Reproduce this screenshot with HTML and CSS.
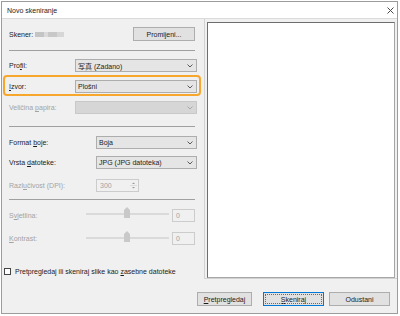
FILE: index.html
```html
<!DOCTYPE html>
<html>
<head>
    <title>Novo skeniranje</title>
    <link rel="stylesheet" href="styles.css">
</head>
<body>
    <div class="window">
        <div class="titlebar">
            <span class="title">Novo skeniranje</span>
            <svg class="close" width="7" height="7" viewBox="0 0 7 7"><path d="M0.5 0.5 L6.5 6.5 M6.5 0.5 L0.5 6.5" stroke="#4a4a4a" stroke-width="1" fill="none"/></svg>
        </div>

        <div class="main">
            <div class="settings">
                <div class="row row-scanner">
                    <span class="scanner-label">Skener:</span>
                    <span class="scanner-name"></span>
                    <button class="btn btn-change">Promi<u>j</u>eni...</button>
                </div>

                <div class="sep sep-first"></div>

                <div class="row row-profile">
                    <span class="label">Pro<u>f</u>il:</span>
                    <div class="select select-wide">
                        <span class="cjk">写真 (Zadano)</span>
                        <svg class="chev" width="6" height="4" viewBox="0 0 6 4"><path d="M0.5 0.5 L3 3 L5.5 0.5" fill="none" stroke="#5a5a5a"/></svg>
                    </div>
                </div>

                <div class="highlight">
                    <div class="row">
                        <span class="label"><u>I</u>zvor:</span>
                        <div class="select select-wide">
                            <span>Plošni</span>
                            <svg class="chev" width="6" height="4" viewBox="0 0 6 4"><path d="M0.5 0.5 L3 3 L5.5 0.5" fill="none" stroke="#5a5a5a"/></svg>
                        </div>
                    </div>
                </div>

                <div class="row row-paper disabled">
                    <span class="label">Veličina <u>p</u>apira:</span>
                    <div class="select select-wide select-off">
                        <span></span>
                        <svg class="chev" width="6" height="4" viewBox="0 0 6 4"><path d="M0.5 0.5 L3 3 L5.5 0.5" fill="none" stroke="#a8a8a8"/></svg>
                    </div>
                </div>

                <div class="sep sep-second"></div>

                <div class="row row-color">
                    <span class="label">Format <u>b</u>oje:</span>
                    <div class="select select-narrow">
                        <span>Boja</span>
                        <svg class="chev" width="6" height="4" viewBox="0 0 6 4"><path d="M0.5 0.5 L3 3 L5.5 0.5" fill="none" stroke="#5a5a5a"/></svg>
                    </div>
                </div>

                <div class="row row-type">
                    <span class="label">Vrsta <u>d</u>atoteke:</span>
                    <div class="select select-narrow">
                        <span>JPG (JPG datoteka)</span>
                        <svg class="chev" width="6" height="4" viewBox="0 0 6 4"><path d="M0.5 0.5 L3 3 L5.5 0.5" fill="none" stroke="#5a5a5a"/></svg>
                    </div>
                </div>

                <div class="row row-dpi disabled">
                    <span class="label">Razl<u>u</u>čivost (DPI):</span>
                    <div class="spin">
                        <span class="spin-value">300</span>
                        <span class="spin-arrows">
                            <svg width="9" height="11" viewBox="0 0 9 11"><path d="M3 4 L4.5 2.5 L6 4 Z" fill="#9a9a9a"/><path d="M1 5.5 H8" stroke="#dcdcdc"/><path d="M3 7 L4.5 8.5 L6 7 Z" fill="#9a9a9a"/></svg>
                        </span>
                    </div>
                    <span class="spin-fill"></span>
                </div>

                <div class="sep sep-third"></div>

                <div class="row row-bright disabled">
                    <span class="label slider-label">S<u>v</u>jetlina:</span>
                    <svg class="slider" width="83" height="13" viewBox="0 0 83 13"><rect x="0" y="4" width="83" height="2" fill="#dadada"/><polygon points="38,1 41,-2 44,1 44,9 38,9" fill="#c9c9c9"/></svg>
                    <span class="value-box">0</span>
                </div>

                <div class="row row-contrast disabled">
                    <span class="label slider-label"><u>K</u>ontrast:</span>
                    <svg class="slider" width="83" height="13" viewBox="0 0 83 13"><rect x="0" y="5" width="83" height="2" fill="#dadada"/><polygon points="38,2 41,-1 44,2 44,10 38,10" fill="#c9c9c9"/></svg>
                    <span class="value-box">0</span>
                </div>

                <div class="check-row">
                    <span class="checkbox"></span>
                    <span>Pretpregledaj ili skeniraj slike kao <u>z</u>asebne datoteke</span>
                </div>
            </div>

            <div class="preview">
                <div class="preview-box"></div>
            </div>
        </div>

        <div class="footer">
            <button class="btn btn-preview"><u>P</u>retpregledaj</button>
            <button class="btn btn-scan"><u>S</u>keniraj</button>
            <button class="btn btn-cancel">Odustani</button>
        </div>
    </div>
</body>
</html>
```

FILE: styles.css
```css
body {
    margin: 0;
    padding: 1px 0 0 1px;
    background: #fff;
    font-family: "Liberation Sans", Arial, sans-serif;
    font-size: 7px;
    color: #1c1c1c;
}
.window {
    width: 395px;
    height: 311px;
    border: 1px solid #9c9c9c;
    background: #f0f0f0;
    display: flex;
    flex-direction: column;
}
.titlebar {
    height: 16px;
    background: #fff;
    border-bottom: 1px solid #dadada;
    display: flex;
    align-items: center;
    justify-content: space-between;
    padding: 0 3px 0 5px;
}
.title {
    padding-top: 1px;
}
.close {
    display: block;
}
.main {
    height: 260px;
    display: flex;
}
.settings {
    width: 202px;
    padding: 0 7px;
    box-sizing: border-box;
    flex: none;
}
.row {
    display: flex;
    align-items: center;
    height: 13px;
}
.label {
    flex: 1;
    white-space: nowrap;
}
.disabled {
    color: #a3a3a3;
}
u {
    text-decoration-thickness: 1px;
    text-underline-offset: 1px;
}

/* scanner row */
.row-scanner {
    margin-top: 8px;
    height: 14px;
}
.scanner-name {
    display: inline-block;
    width: 29px;
    height: 5px;
    margin-left: 2px;
    background: linear-gradient(90deg, #c4c4c4 0 30%, #dadada 30% 45%, #c8c8c8 45% 75%, #d6d6d6 75%);
    filter: blur(0.4px);
}
.btn {
    height: 14px;
    border: 1px solid #adadad;
    background: #e1e1e1;
    font-family: inherit;
    font-size: 7px;
    color: #1c1c1c;
    padding: 0;
    box-sizing: border-box;
}
.btn-change {
    width: 62px;
    margin-left: auto;
    margin-right: 2px;
}

.sep {
    height: 1px;
    background: #a0a0a0;
    margin-right: 2px;
}
.sep-first {
    margin-top: 9px;
}
.sep-second {
    margin-top: 12px;
}
.sep-third {
    margin-top: 7px;
}

/* combo boxes */
.select {
    height: 13px;
    box-sizing: border-box;
    border: 1px solid #adadad;
    background: #e5e5e5;
    display: flex;
    align-items: center;
    justify-content: space-between;
    padding: 0 3px 0 2px;
    flex: none;
    color: #1c1c1c;
}
.select-wide {
    width: 122px;
}
.select-narrow {
    width: 101px;
}
.select-off {
    background: #d6d6d6;
    border-color: #c8c8c8;
}
.chev {
    display: block;
}
.cjk {
    font-family: "Liberation Sans", "Noto Sans CJK JP", sans-serif;
}

.row-profile {
    margin-top: 8px;
}
.highlight {
    margin: 3px -4px 0 -6px;
    border: 2px solid #f6a72c;
    border-radius: 4px;
    padding: 3px 2px 1px 4px;
}
.row-paper {
    margin-top: 5px;
}
.row-color {
    margin-top: 9px;
}
.row-type {
    margin-top: 7px;
}
.row-dpi {
    margin-top: 10px;
}

/* spin box */
.spin {
    width: 43px;
    height: 13px;
    box-sizing: border-box;
    border: 1px solid #cccccc;
    background: #f0f0f0;
    display: flex;
    align-items: center;
    justify-content: space-between;
    padding-left: 3px;
}
.spin-arrows svg {
    display: block;
}
.spin-fill {
    width: 58px;
}

/* sliders */
.row-bright {
    margin-top: 9px;
}
.row-contrast {
    margin-top: 10px;
}
.slider-label {
    flex: none;
    width: 77px;
}
.slider {
    overflow: visible;
    flex: none;
}
.value-box {
    width: 23px;
    height: 13px;
    box-sizing: border-box;
    border: 1px solid #cccccc;
    background: #f0f0f0;
    margin-left: 3px;
    padding-left: 3px;
    line-height: 11px;
}

.check-row {
    margin: 23px 0 0 -5px;
    display: flex;
    align-items: center;
    height: 7px;
    white-space: nowrap;
}
.checkbox {
    width: 7px;
    height: 7px;
    box-sizing: border-box;
    border: 1px solid #444;
    background: #fff;
    margin-right: 4px;
    flex: none;
}

/* preview */
.preview {
    flex: 1;
    display: flex;
    border-left: 1px solid #d2d2d2;
    border-bottom: 1px solid #d2d2d2;
    padding: 3px 2px 0 2px;
}
.preview-box {
    flex: 1;
    background: #fff;
    border: 1px solid;
    border-color: #6e6e6e #a6a6a6 #a6a6a6 #6e6e6e;
}

/* bottom buttons */
.footer {
    flex: 1;
    display: flex;
    justify-content: flex-end;
    align-items: flex-start;
    padding: 13px 7px 0 0;
}
.btn-preview {
    width: 55px;
}
.btn-scan {
    width: 61px;
    margin-left: 11px;
    border-color: #0078d7;
    outline: 1px dotted #6a6a6a;
    outline-offset: -3px;
}
.btn-cancel {
    width: 61px;
    margin-left: 5px;
}
```
